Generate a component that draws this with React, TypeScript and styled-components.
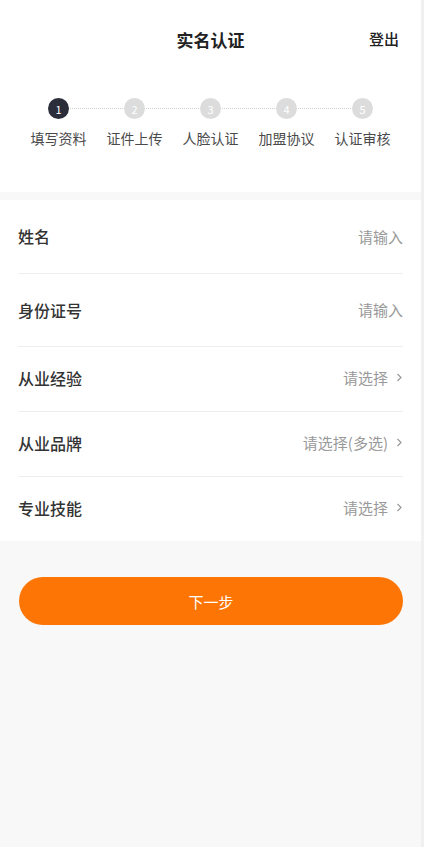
import * as React from "react";
import styled, { createGlobalStyle } from "styled-components";

const GlobalStyle = createGlobalStyle`
  html, body {
    margin: 0;
    padding: 0;
    background: #f0f0f0;
    font-family: "Noto Sans CJK SC", "Noto Sans", sans-serif;
  }
`;

const Page = styled.div`
  width: 421px;
  min-height: 847px;
  background: #f8f8f8;
`;

const Top = styled.div`
  background: #fff;
  padding-bottom: 44px;
`;

const Header = styled.div`
  height: 78px;
  display: flex;
  align-items: center;
  justify-content: center;
  position: relative;
`;

const Title = styled.div`
  font-size: 17px;
  font-weight: 700;
  color: #222;
`;

const Logout = styled.div`
  position: absolute;
  right: 22px;
  top: 28px;
  font-size: 15px;
  font-weight: 500;
  color: #222;
`;

const Steps = styled.div`
  display: grid;
  grid-template-columns: repeat(5, 76px);
  justify-content: center;
  padding-top: 20px;
`;

const Step = styled.div`
  display: flex;
  flex-direction: column;
  align-items: center;
  position: relative;
`;

const Dot = styled.div<{ $active: boolean }>`
  width: 21px;
  height: 21px;
  border-radius: 50%;
  background: ${p => (p.$active ? "#2b2d3a" : "#dcdcdc")};
  color: #fff;
  font-size: 11px;
  display: flex;
  align-items: center;
  justify-content: center;
  position: relative;
  z-index: 1;
`;

const Link = styled.div`
  position: absolute;
  top: 10px;
  left: 50%;
  width: 76px;
  border-top: 1px dotted #cfcfcf;
`;

const StepLabel = styled.div`
  margin-top: 9px;
  font-size: 14px;
  color: #4a4a4a;
  white-space: nowrap;
`;

const Form = styled.div`
  margin-top: 8px;
  background: #fff;
  padding: 0 18px;
`;

const Row = styled.div<{ $tall: boolean }>`
  height: ${p => (p.$tall ? 73 : 65)}px;
  display: flex;
  align-items: center;
  justify-content: space-between;
  box-sizing: border-box;
  padding-bottom: ${p => (p.$tall ? 1 : 3)}px;

  & + & {
    border-top: 1px solid #eee;
  }
`;

const Label = styled.div`
  font-size: 16px;
  font-weight: 500;
  color: #333;
`;

const Value = styled.div`
  display: flex;
  align-items: center;
  gap: 8px;
  font-size: 15px;
  color: #999;
`;

const Chevron = styled.svg`
  width: 7px;
  height: 9px;
`;

const Footer = styled.div`
  padding: 36px 18px 0 19px;
`;

const NextButton = styled.button`
  width: 100%;
  height: 48px;
  border: none;
  border-radius: 24px;
  background: #fc7505;
  color: #fff;
  font-size: 15px;
  font-family: inherit;
`;

const steps = ["填写资料", "证件上传", "人脸认证", "加盟协议", "认证审核"];

const rows = [
  { label: "姓名", value: "请输入", select: false },
  { label: "身份证号", value: "请输入", select: false },
  { label: "从业经验", value: "请选择", select: true },
  { label: "从业品牌", value: "请选择(多选)", select: true },
  { label: "专业技能", value: "请选择", select: true },
];

export default function App() {
  return (
    <Page>
      <GlobalStyle />
      <Top>
        <Header>
          <Title>实名认证</Title>
          <Logout>登出</Logout>
        </Header>
        <Steps>
          {steps.map((s, i) => (
            <Step key={s}>
              {i < steps.length - 1 && <Link />}
              <Dot $active={i === 0}>{i + 1}</Dot>
              <StepLabel>{s}</StepLabel>
            </Step>
          ))}
        </Steps>
      </Top>
      <Form>
        {rows.map(r => (
          <Row key={r.label} $tall={!r.select}>
            <Label>{r.label}</Label>
            <Value>
              {r.value}
              {r.select && (
                <Chevron viewBox="0 0 7 9">
                  <path d="M1.5 1 L5 4.5 L1.5 8" fill="none" stroke="#999" strokeWidth="1.2" />
                </Chevron>
              )}
            </Value>
          </Row>
        ))}
      </Form>
      <Footer>
        <NextButton>下一步</NextButton>
      </Footer>
    </Page>
  );
}
